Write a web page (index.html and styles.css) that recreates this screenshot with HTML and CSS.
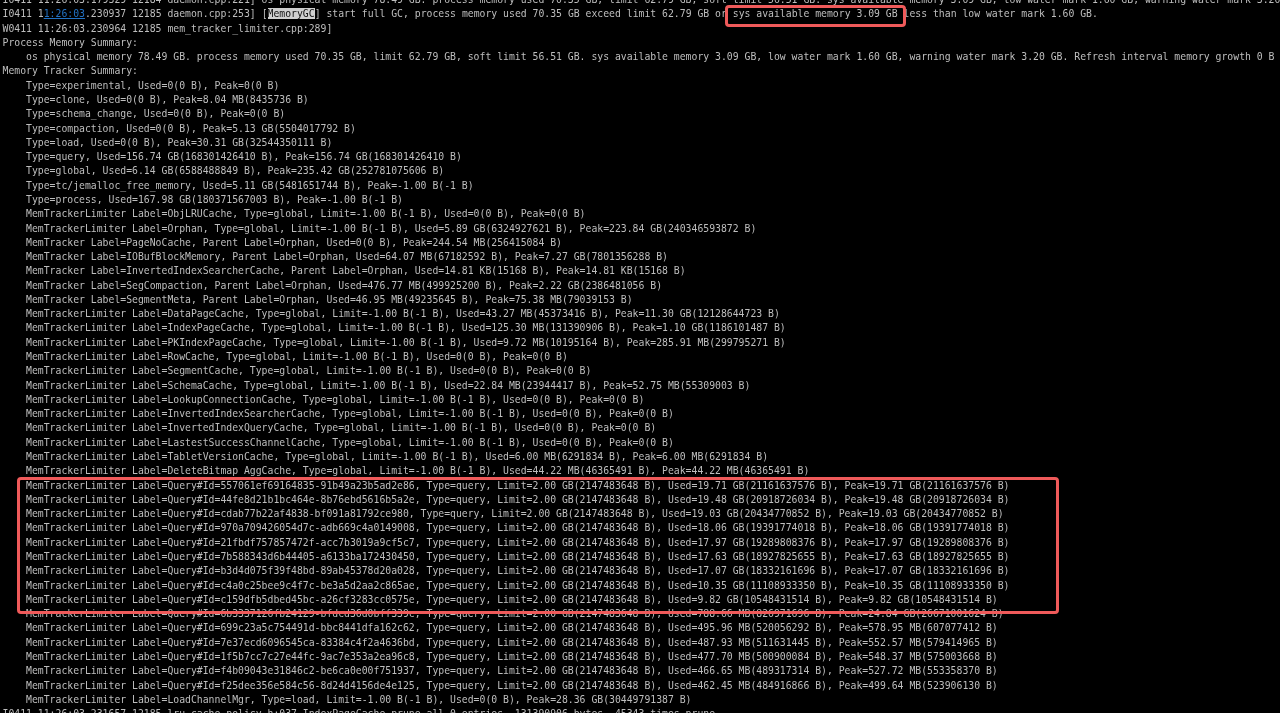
FILE: index.html
```html
<!DOCTYPE html>
<html lang="en">
<head>
<meta charset="utf-8">
<title>Memory log</title>
<link rel="stylesheet" href="styles.css">
</head>
<body>
<main class="terminal">
<pre class="log">I0411 11:26:03.179329 12184 daemon.cpp:221] os physical memory 78.49 GB. process memory used 70.35 GB, limit 62.79 GB, soft limit 56.51 GB. sys available memory 3.09 GB, low water mark 1.60 GB, warning water mark 3.20 GB.
I0411 1<a class="link">1:26:03</a>.230937 12185 daemon.cpp:253] [<span class="sel">MemoryGC</span>] start full GC, process memory used 70.35 GB exceed limit 62.79 GB or sys available memory 3.09 GB less than low water mark 1.60 GB.
W0411 11:26:03.230964 12185 mem_tracker_limiter.cpp:289]
Process Memory Summary:
    os physical memory 78.49 GB. process memory used 70.35 GB, limit 62.79 GB, soft limit 56.51 GB. sys available memory 3.09 GB, low water mark 1.60 GB, warning water mark 3.20 GB. Refresh interval memory growth 0 B
Memory Tracker Summary:
    Type=experimental, Used=0(0 B), Peak=0(0 B)
    Type=clone, Used=0(0 B), Peak=8.04 MB(8435736 B)
    Type=schema_change, Used=0(0 B), Peak=0(0 B)
    Type=compaction, Used=0(0 B), Peak=5.13 GB(5504017792 B)
    Type=load, Used=0(0 B), Peak=30.31 GB(32544350111 B)
    Type=query, Used=156.74 GB(168301426410 B), Peak=156.74 GB(168301426410 B)
    Type=global, Used=6.14 GB(6588488849 B), Peak=235.42 GB(252781075606 B)
    Type=tc/jemalloc_free_memory, Used=5.11 GB(5481651744 B), Peak=-1.00 B(-1 B)
    Type=process, Used=167.98 GB(180371567003 B), Peak=-1.00 B(-1 B)
    MemTrackerLimiter Label=ObjLRUCache, Type=global, Limit=-1.00 B(-1 B), Used=0(0 B), Peak=0(0 B)
    MemTrackerLimiter Label=Orphan, Type=global, Limit=-1.00 B(-1 B), Used=5.89 GB(6324927621 B), Peak=223.84 GB(240346593872 B)
    MemTracker Label=PageNoCache, Parent Label=Orphan, Used=0(0 B), Peak=244.54 MB(256415084 B)
    MemTracker Label=IOBufBlockMemory, Parent Label=Orphan, Used=64.07 MB(67182592 B), Peak=7.27 GB(7801356288 B)
    MemTracker Label=InvertedIndexSearcherCache, Parent Label=Orphan, Used=14.81 KB(15168 B), Peak=14.81 KB(15168 B)
    MemTracker Label=SegCompaction, Parent Label=Orphan, Used=476.77 MB(499925200 B), Peak=2.22 GB(2386481056 B)
    MemTracker Label=SegmentMeta, Parent Label=Orphan, Used=46.95 MB(49235645 B), Peak=75.38 MB(79039153 B)
    MemTrackerLimiter Label=DataPageCache, Type=global, Limit=-1.00 B(-1 B), Used=43.27 MB(45373416 B), Peak=11.30 GB(12128644723 B)
    MemTrackerLimiter Label=IndexPageCache, Type=global, Limit=-1.00 B(-1 B), Used=125.30 MB(131390906 B), Peak=1.10 GB(1186101487 B)
    MemTrackerLimiter Label=PKIndexPageCache, Type=global, Limit=-1.00 B(-1 B), Used=9.72 MB(10195164 B), Peak=285.91 MB(299795271 B)
    MemTrackerLimiter Label=RowCache, Type=global, Limit=-1.00 B(-1 B), Used=0(0 B), Peak=0(0 B)
    MemTrackerLimiter Label=SegmentCache, Type=global, Limit=-1.00 B(-1 B), Used=0(0 B), Peak=0(0 B)
    MemTrackerLimiter Label=SchemaCache, Type=global, Limit=-1.00 B(-1 B), Used=22.84 MB(23944417 B), Peak=52.75 MB(55309003 B)
    MemTrackerLimiter Label=LookupConnectionCache, Type=global, Limit=-1.00 B(-1 B), Used=0(0 B), Peak=0(0 B)
    MemTrackerLimiter Label=InvertedIndexSearcherCache, Type=global, Limit=-1.00 B(-1 B), Used=0(0 B), Peak=0(0 B)
    MemTrackerLimiter Label=InvertedIndexQueryCache, Type=global, Limit=-1.00 B(-1 B), Used=0(0 B), Peak=0(0 B)
    MemTrackerLimiter Label=LastestSuccessChannelCache, Type=global, Limit=-1.00 B(-1 B), Used=0(0 B), Peak=0(0 B)
    MemTrackerLimiter Label=TabletVersionCache, Type=global, Limit=-1.00 B(-1 B), Used=6.00 MB(6291834 B), Peak=6.00 MB(6291834 B)
    MemTrackerLimiter Label=DeleteBitmap AggCache, Type=global, Limit=-1.00 B(-1 B), Used=44.22 MB(46365491 B), Peak=44.22 MB(46365491 B)
    MemTrackerLimiter Label=Query#Id=557061ef69164835-91b49a23b5ad2e86, Type=query, Limit=2.00 GB(2147483648 B), Used=19.71 GB(21161637576 B), Peak=19.71 GB(21161637576 B)
    MemTrackerLimiter Label=Query#Id=44fe8d21b1bc464e-8b76ebd5616b5a2e, Type=query, Limit=2.00 GB(2147483648 B), Used=19.48 GB(20918726034 B), Peak=19.48 GB(20918726034 B)
    MemTrackerLimiter Label=Query#Id=cdab77b22af4838-bf091a81792ce980, Type=query, Limit=2.00 GB(2147483648 B), Used=19.03 GB(20434770852 B), Peak=19.03 GB(20434770852 B)
    MemTrackerLimiter Label=Query#Id=970a709426054d7c-adb669c4a0149008, Type=query, Limit=2.00 GB(2147483648 B), Used=18.06 GB(19391774018 B), Peak=18.06 GB(19391774018 B)
    MemTrackerLimiter Label=Query#Id=21fbdf757857472f-acc7b3019a9cf5c7, Type=query, Limit=2.00 GB(2147483648 B), Used=17.97 GB(19289808376 B), Peak=17.97 GB(19289808376 B)
    MemTrackerLimiter Label=Query#Id=7b588343d6b44405-a6133ba172430450, Type=query, Limit=2.00 GB(2147483648 B), Used=17.63 GB(18927825655 B), Peak=17.63 GB(18927825655 B)
    MemTrackerLimiter Label=Query#Id=b3d4d075f39f48bd-89ab45378d20a028, Type=query, Limit=2.00 GB(2147483648 B), Used=17.07 GB(18332161696 B), Peak=17.07 GB(18332161696 B)
    MemTrackerLimiter Label=Query#Id=c4a0c25bee9c4f7c-be3a5d2aa2c865ae, Type=query, Limit=2.00 GB(2147483648 B), Used=10.35 GB(11108933350 B), Peak=10.35 GB(11108933350 B)
    MemTrackerLimiter Label=Query#Id=c159dfb5dbed45bc-a26cf3283cc0575e, Type=query, Limit=2.00 GB(2147483648 B), Used=9.82 GB(10548431514 B), Peak=9.82 GB(10548431514 B)
    MemTrackerLimiter Label=Query#Id=6b3337126fb24129-bfdcd36d0bff339c, Type=query, Limit=2.00 GB(2147483648 B), Used=788.66 MB(826971696 B), Peak=24.84 GB(26671001624 B)
    MemTrackerLimiter Label=Query#Id=699c23a5c754491d-bbc8441dfa162c62, Type=query, Limit=2.00 GB(2147483648 B), Used=495.96 MB(520056292 B), Peak=578.95 MB(607077412 B)
    MemTrackerLimiter Label=Query#Id=7e37ecd6096545ca-83384c4f2a4636bd, Type=query, Limit=2.00 GB(2147483648 B), Used=487.93 MB(511631445 B), Peak=552.57 MB(579414965 B)
    MemTrackerLimiter Label=Query#Id=1f5b7cc7c27e44fc-9ac7e353a2ea96c8, Type=query, Limit=2.00 GB(2147483648 B), Used=477.70 MB(500900084 B), Peak=548.37 MB(575003668 B)
    MemTrackerLimiter Label=Query#Id=f4b09043e31846c2-be6ca0e00f751937, Type=query, Limit=2.00 GB(2147483648 B), Used=466.65 MB(489317314 B), Peak=527.72 MB(553358370 B)
    MemTrackerLimiter Label=Query#Id=f25dee356e584c56-8d24d4156de4e125, Type=query, Limit=2.00 GB(2147483648 B), Used=462.45 MB(484916866 B), Peak=499.64 MB(523906130 B)
    MemTrackerLimiter Label=LoadChannelMgr, Type=load, Limit=-1.00 B(-1 B), Used=0(0 B), Peak=28.36 GB(30449791387 B)
I0411 11:26:03.231657 12185 lru_cache_policy.h:037 IndexPageCache prune all 0 entries, 131390906 bytes, 45343 times prune</pre>
<div class="mark mark-sys"></div>
<div class="mark mark-queries"></div>
</main>
</body>
</html>
```
FILE: styles.css
```css
html, body {
  margin: 0;
  padding: 0;
  background: #000;
}
.terminal {
  position: relative;
  width: 1280px;
  height: 713px;
  overflow: hidden;
  background: #000;
}
.log {
  margin: -7px 0 0 2.5px;
  font-family: "DejaVu Sans Mono", monospace;
  font-size: 9.79px;
  line-height: 14.28px;
  color: #bebebe;
  white-space: pre;
  filter: blur(0.3px);
}
.link {
  color: #2272c4;
  text-decoration: underline;
}
.sel {
  background: #cfcfcf;
  color: #111;
}
.mark {
  position: absolute;
  box-sizing: border-box;
  border: 3px solid #ef5a5a;
  border-radius: 4px;
}
.mark-sys {
  left: 725px;
  top: 5px;
  width: 181px;
  height: 22px;
}
.mark-queries {
  left: 17px;
  top: 476.5px;
  width: 1042px;
  height: 137px;
}
```
